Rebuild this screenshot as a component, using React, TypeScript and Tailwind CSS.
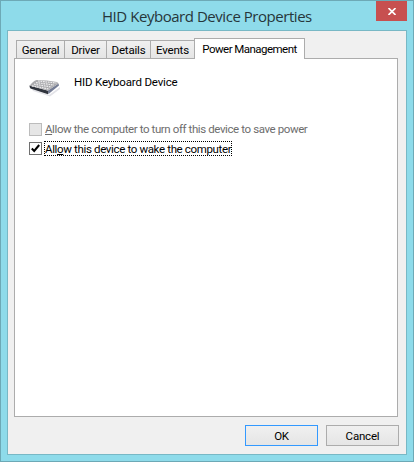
import type { ReactNode } from 'react';

function Tab({ label, className }: { label: string; className: string }) {
  return (
    <div
      className={`flex h-[18px] items-center justify-center border-t border-r border-[#acacac] bg-gradient-to-b from-[#f0f0f0] to-[#e5e5e5] pt-px whitespace-nowrap ${className}`}
    >
      {label}
    </div>
  );
}

function PushButton({ children, className }: { children: ReactNode; className: string }) {
  return (
    <button
      className={`flex h-[21px] w-[73px] items-center justify-center border bg-gradient-to-b from-[#f0f0f0] to-[#e5e5e5] ${className}`}
    >
      {children}
    </button>
  );
}

function KeyboardIcon() {
  return (
    <svg width="32" height="18" viewBox="0 0 32 18" className="block">
      <path d="M3 10 L20 16 L31 8 L31 10 L21 17.5 L4 12Z" fill="#e3e3e8" />
      <path d="M0.5 6.5 Q0.5 8.5 1.5 9.5 L19 15.2 L20 12Z" fill="#30343d" />
      <path d="M19 11.5 L29.5 4.5 L30 6.5 L19.5 15Z" fill="#747c94" />
      <path d="M0.5 6.8 Q4 2 7.5 1 Q18 1 28 3 L29.5 4.5 L19 11.6Z" fill="#ababae" />
      <g stroke="#ededee" strokeWidth="1.2" strokeDasharray="1.7 0.8">
        <path d="M9 2 L27.5 4" />
        <path d="M7 3.6 L25 6" />
        <path d="M5 5.2 L22.5 8" />
        <path d="M3 6.8 L20 10" />
      </g>
    </svg>
  );
}

export default function App() {
  return (
    <div className="flex h-[462px] w-[414px] flex-col border border-[#6da9b6] bg-[#8edbea] px-1.5 pb-1.5 font-['Roboto','Liberation_Sans',sans-serif] text-[11.5px] leading-[14px] tracking-[-0.2px] text-black">
      <header className="flex h-[29px] shrink-0 items-start">
        <h1 className="ml-[95px] mt-[5px] w-[274px] font-['Open_Sans','Noto_Sans',sans-serif] text-[15px] leading-5 tracking-[-0.46px] whitespace-nowrap text-[#26363a]">
          HID Keyboard Device Properties
        </h1>
        <button aria-label="Close" className="flex h-5 w-[31px] shrink-0 items-center justify-center bg-[#c75050] pt-px">
          <svg width="8" height="7" viewBox="0 0 8 7" fill="none" stroke="white" strokeWidth="1.6">
            <path d="M0.5 0 L7.5 7 M7.5 0 L0.5 7" />
          </svg>
        </button>
      </header>
      <main className="flex h-[425px] w-[400px] flex-col border border-[#78b8c5] bg-[#f0f0f0] px-1.5 pt-[7px]">
        <nav className="z-10 -mb-px flex h-[21px] shrink-0 items-end pl-0.5">
          <Tab label="General" className="mb-px w-[49px] border-l" />
          <Tab label="Driver" className="mb-px w-[42px]" />
          <Tab label="Details" className="mb-px w-[44px]" />
          <Tab label="Events" className="mb-px w-[43px] border-r-0" />
          <div className="flex h-[21px] w-[111px] items-center justify-center border border-b-0 border-[#acacac] bg-white pb-px tracking-[-0.54px] whitespace-nowrap">
            Power Management
          </div>
        </nav>
        <section className="flex h-[359px] w-[384px] shrink-0 flex-col border border-[#acacac] bg-white pl-[14px]">
          <div className="mt-4 flex items-start">
            <div className="mt-[4px] w-[45px]">
              <KeyboardIcon />
            </div>
            <span className="tracking-[-0.17px]">HID Keyboard Device</span>
          </div>
          <div className="mt-[25px] flex items-center">
            <span className="mr-[3px] h-[13px] w-[13px] border border-[#bcbcbc] bg-[#e6e6e6]" />
            <span className="tracking-[-0.4px] whitespace-nowrap text-[#6d6d6d]">
              <u>A</u>llow the computer to turn off this device to save power
            </span>
          </div>
          <div className="mt-[5px] flex items-center">
            <span className="mr-0.5 flex h-[13px] w-[13px] items-center justify-center border border-[#707070] bg-white">
              <svg width="9" height="9" viewBox="0 0 9 9" fill="none" stroke="black" strokeWidth="2">
                <path d="M0.8 4.5 L3.2 7 L8.2 1" />
              </svg>
            </span>
            <span className="flex h-[15px] w-[188px] items-center border border-dotted border-black pt-px tracking-[-0.35px] whitespace-nowrap">
              <span>All<u>o</u>w this device to wake the computer</span>
            </span>
          </div>
        </section>
        <footer className="mt-2 mr-px flex justify-end gap-2">
          <PushButton className="border-[#3399ff]">OK</PushButton>
          <PushButton className="border-[#acacac]">Cancel</PushButton>
        </footer>
      </main>
    </div>
  );
}
